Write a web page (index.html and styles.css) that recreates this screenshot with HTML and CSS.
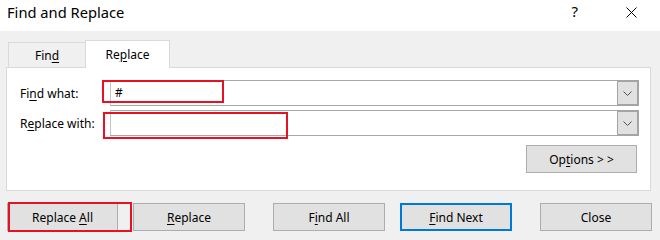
FILE: index.html
```html
<!DOCTYPE html>
<html>
<head>
<meta charset="utf-8">
<link rel="stylesheet" href="styles.css">
</head>
<body>
<div class="dialog">
  <div class="titlebar">
    <span class="title">Find and Replace</span>
    <div class="controls">
      <span class="help">?</span>
      <svg class="close-x" width="11" height="11" viewBox="0 0 11 11"><path d="M0.5 0.5 L10.5 10.5 M10.5 0.5 L0.5 10.5" stroke="#000" stroke-width="1" fill="none"/></svg>
    </div>
  </div>
  <div class="tabs">
    <div class="tab"><span>Fin<u>d</u></span></div>
    <div class="tab active"><span>Re<u>p</u>lace</span></div>
  </div>
  <div class="panel">
    <div class="row">
      <label class="label">Fi<u>n</u>d what:</label>
      <div class="combo">
        <span class="value">#</span>
        <div class="drop"><svg width="9" height="5" viewBox="0 0 9 5"><path d="M0.5 0.5 L4.5 4.5 L8.5 0.5" stroke="#505050" stroke-width="1" fill="none"/></svg></div>
      </div>
    </div>
    <div class="row">
      <label class="label">R<u>e</u>place with:</label>
      <div class="combo">
        <span class="value"></span>
        <div class="drop"><svg width="9" height="5" viewBox="0 0 9 5"><path d="M0.5 0.5 L4.5 4.5 L8.5 0.5" stroke="#505050" stroke-width="1" fill="none"/></svg></div>
      </div>
    </div>
    <div class="opts-row">
      <button class="btn opts"><span>Op<u>t</u>ions &gt; &gt;</span></button>
    </div>
  </div>
  <div class="actions">
    <button class="btn b-all"><span>Replace <u>A</u>ll</span></button>
    <button class="btn b-rep"><span><u>R</u>eplace</span></button>
    <button class="btn b-findall"><span>F<u>i</u>nd All</span></button>
    <button class="btn b-next"><span><u>F</u>ind Next</span></button>
    <button class="btn b-close"><span>Close</span></button>
  </div>
  <div class="mark mark1"></div>
  <div class="mark mark2"></div>
  <div class="mark mark3"></div>
</div>
</body>
</html>
```

FILE: styles.css
```css
* { box-sizing: border-box; }
html, body { margin: 0; padding: 0; }
body {
  width: 660px;
  height: 240px;
  overflow: hidden;
  background: #f0f0f0;
  font-family: "Noto Sans", "Open Sans", sans-serif;
  font-size: 12px;
  color: #000;
}
u { text-decoration: underline; text-underline-offset: 2px; text-decoration-thickness: 1px; }
.dialog { position: relative; width: 660px; height: 240px; }

.titlebar {
  height: 31px;
  background: #fff;
  display: flex;
  align-items: flex-start;
  justify-content: space-between;
}
.title {
  font-size: 14.7px;
  line-height: 20px;
  padding: 2px 0 0 7px;
}
.controls { display: flex; align-items: flex-start; padding-right: 23px; }
.help {
  font-size: 15px;
  line-height: 20px;
  padding-top: 1px;
  margin-right: 48px;
}
.close-x { margin-top: 7px; display: block; }

.tabs {
  display: flex;
  align-items: flex-end;
  height: 27px;
  margin-top: 9px;
  padding-left: 8px;
  position: relative;
  z-index: 1;
}
.tab {
  height: 25px;
  width: 78px;
  border: 1px solid #d9d9d9;
  border-bottom: none;
  background: #f0f0f0;
  display: flex;
  align-items: center;
  justify-content: center;
  padding-top: 1px;
}
.tab.active {
  height: 28px;
  width: 85px;
  margin-left: -1px;
  margin-bottom: -1px;
  background: #fff;
  padding-top: 0;
}

.panel {
  margin-left: 6px;
  width: 645px;
  height: 124px;
  background: #fff;
  border: 1px solid #d9d9d9;
  padding: 12px 11px 0 13px;
}
.row {
  display: flex;
  align-items: center;
  height: 26px;
  margin-bottom: 4px;
}
.label { width: 90px; flex: none; }
.combo {
  flex: 1;
  height: 26px;
  display: flex;
  border: 1px solid #a8a8a8;
  border-left-color: #c4c4c4;
  background: #fff;
}
.value { flex: 1; padding-left: 4px; line-height: 23px; }
.drop {
  width: 22px;
  margin: -1px -1px -1px 0;
  background: #e1e1e1;
  border: 2px solid #a4a4a4;
  border-left-width: 1px;
  display: flex;
  align-items: center;
  justify-content: center;
}
.drop svg { display: block; }
.opts-row {
  display: flex;
  justify-content: flex-end;
  padding-right: 2px;
  margin-top: 9px;
}

.btn {
  font-family: inherit;
  font-size: 12px;
  color: #000;
  height: 28px;
  width: 112px;
  background: #e1e1e1;
  border: 1px solid #adadad;
  padding: 0;
  margin: 0;
  display: flex;
  align-items: center;
  justify-content: center;
  white-space: pre;
}
.btn span { padding-top: 1px; }
.opts { width: 111px; }

.actions {
  display: flex;
  margin-top: 12px;
  padding-left: 7px;
}
.b-all { width: 111px; }
.b-rep { margin-left: 15px; }
.b-findall { margin-left: 28px; }
.b-next { margin-left: 15px; border: 2px solid #0078d7; }
.b-close { margin-left: 28px; }

.mark {
  position: absolute;
  border: 2px solid #e81123;
  pointer-events: none;
  z-index: 5;
}
.mark1 { left: 102px; top: 80px; width: 122px; height: 23px; }
.mark2 { left: 103px; top: 112px; width: 185px; height: 27px; }
.mark3 { left: 8px; top: 202px; width: 124px; height: 30px; }
```
